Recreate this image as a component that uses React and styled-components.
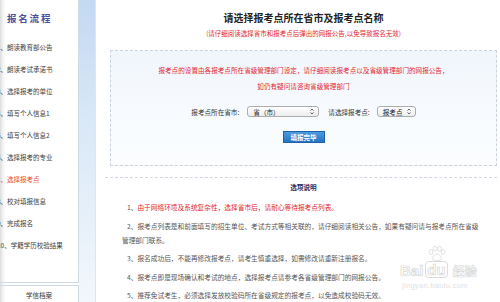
import React from "react";
import styled, { createGlobalStyle } from "styled-components";

const Global = createGlobalStyle`
  html, body { margin: 0; padding: 0; background: #fff; }
  body {
    width: 500px; height: 302px; overflow: hidden;
    font-family: "Noto Sans CJK SC", "Noto Sans", sans-serif;
    color: #444;
  }
`;

const Page = styled.div`
  display: flex;
  width: 500px;
  height: 302px;
  overflow: hidden;
`;

const Sidebar = styled.aside`
  width: 79px;
  flex: none;
  display: flex;
  flex-direction: column;
  gap: 2px;
  background: linear-gradient(to right, #dcdcdc, #f4f4f4 3px, #fff 6px);
`;

const NavBox = styled.div`
  box-sizing: border-box;
  height: 283px;
  border-right: 1px solid #cfdae6;
  border-bottom: 1px solid #cfdae6;
  padding-top: 11px;
`;

const NavTitle = styled.div`
  font-size: 9.5px;
  line-height: 14px;
  font-weight: 700;
  letter-spacing: 1.8px;
  color: #4b4f9e;
  padding-left: 7px;
`;

const NavList = styled.ul`
  list-style: none;
  margin: 11px 0 0 -3px;
  padding: 0;
`;

const NavItem = styled.li`
  height: 22px;
  line-height: 22px;
  font-size: 6.5px;
  white-space: nowrap;
  color: ${(p) => (p.$active ? "#ec4a2a" : "#3d3d3d")};
`;

const ArchiveBox = styled.div`
  flex: 1;
  border-top: 1px solid #cfdae6;
  border-right: 1px solid #cfdae6;
  padding-top: 2px;
  text-align: center;
`;

const ArchiveTitle = styled.div`
  font-size: 6.5px;
  line-height: 14px;
  color: #333;
`;

const Strip = styled.div`
  width: 16px;
  flex: none;
  background: linear-gradient(to bottom, #c2d9f2, #d9e8f7 40%, #f2f7fc);
`;

const Main = styled.main`
  position: relative;
  flex: 1;
  border-left: 1px solid #dfe5ec;
  background: #fff;
`;

const Column = styled.div`
  width: 387px;
  margin-left: 14px;
  padding-top: 11px;
  display: flex;
  flex-direction: column;
`;

const Title = styled.h1`
  margin: 0;
  text-align: center;
  font-size: 10px;
  line-height: 14px;
  font-weight: 700;
  color: #222;
`;

const Subtitle = styled.div`
  margin-top: 3px;
  text-align: center;
  font-size: 6.5px;
  line-height: 10px;
  color: #e3262e;
`;

const NoticeBox = styled.section`
  margin-top: 12px;
  height: 116px;
  box-sizing: border-box;
  border: 1px dashed #c9d2de;
  background: linear-gradient(to bottom, #f1f6fc, #f8fbfe 60%, #fbfdff);
  padding-top: 11px;
  display: flex;
  flex-direction: column;
  align-items: center;
`;

const Notice = styled.p`
  margin: 0;
  text-align: center;
  font-size: 6.6px;
  line-height: 16px;
  color: #e3262e;
  white-space: nowrap;
`;

const FormRow = styled.div`
  margin-top: 12px;
  height: 11px;
  display: flex;
  align-items: center;
  font-size: 6.6px;
  color: #333;
`;

const Label = styled.span`
  margin-left: ${(p) => p.$gap || 0}px;
  white-space: nowrap;
`;

const Select = styled.div`
  box-sizing: border-box;
  width: ${(p) => p.$w}px;
  height: 11px;
  margin-left: ${(p) => p.$gap}px;
  border: 1px solid #adadad;
  border-radius: 3px;
  background: linear-gradient(#ffffff, #ededed);
  display: flex;
  align-items: center;
  justify-content: space-between;
  padding: 0 4px 0 5px;
  font-size: 6.6px;
  color: #222;
  white-space: nowrap;
`;

const SubmitButton = styled.button`
  margin-top: 14px;
  width: 42px;
  height: 12px;
  padding: 0;
  border: 1px solid #1d63a8;
  background: linear-gradient(#4b9be0, #2774c2);
  color: #fff;
  font-family: inherit;
  font-size: 6.5px;
  font-weight: 700;
  line-height: 10px;
`;

const Divider = styled.hr`
  margin: 11px 0 0 -5px;
  border: none;
  border-top: 1px dashed #d3d9e2;
  width: 392px;
`;

const SectionTitle = styled.h2`
  margin: 2px 0 0;
  text-align: center;
  font-size: 6.6px;
  line-height: 14px;
  font-weight: 700;
  color: #2b2d63;
`;

const Tips = styled.ol`
  list-style: none;
  margin: 6px 0 0;
  padding: 0 0 0 12px;
  display: flex;
  flex-direction: column;
  gap: 4.5px;
`;

const Tip = styled.li`
  font-size: 6.7px;
  line-height: 14px;
  color: #555;
  text-indent: 5px;
  white-space: nowrap;
`;

const Red = styled.span`
  color: #e3262e;
`;

const Watermark = styled.div`
  position: absolute;
  left: 304px;
  top: 247px;
  display: flex;
  flex-direction: column;
  align-items: flex-start;
  pointer-events: none;
`;

const MarkRow = styled.div`
  position: relative;
  display: flex;
  align-items: flex-end;
  gap: 2px;
  margin-top: 14px;
`;

const MarkLatin = styled.span`
  font-family: "Liberation Sans", Arial, sans-serif;
  font-weight: 700;
  font-size: 15px;
  line-height: 15px;
  color: #fff;
  -webkit-text-stroke: 0.7px #d6d6d6;
`;

const MarkDu = styled(MarkLatin)`
  border: 1px solid #dcdcdc;
  border-radius: 4px;
  padding: 0 1px;
`;

const MarkCjk = styled.span`
  font-size: 12px;
  line-height: 14px;
  font-weight: 700;
  margin-left: 3px;
  color: #fff;
  -webkit-text-stroke: 0.6px #d6d6d6;
`;

const Paw = styled.svg`
  position: absolute;
  left: 27px;
  top: -15px;
`;

const MarkUrl = styled.div`
  margin-top: 3px;
  margin-left: 2px;
  font-family: "Liberation Sans", Arial, sans-serif;
  font-size: 7.5px;
  color: #e2e2e2;
  letter-spacing: 0.3px;
`;

const Arrows = () => (
  <svg width="4" height="7" viewBox="0 0 4 7" fill="none" stroke="#444" strokeWidth="0.8">
    <path d="M0.5 2.6 L2 1 L3.5 2.6" />
    <path d="M0.5 4.4 L2 6 L3.5 4.4" />
  </svg>
);

const steps = [
  "1、朗读教育部公告",
  "2、朗读考试承诺书",
  "3、选择报考的单位",
  "4、填写个人信息1",
  "5、填写个人信息2",
  "6、选择报考的专业",
  "7、选择报考点",
  "8、校对填报信息",
  "9、完成报名",
  "10、学籍学历校验结果",
];

export default function App() {
  return (
    <>
      <Global />
      <Page>
        <Sidebar>
          <NavBox>
            <NavTitle>报名流程</NavTitle>
            <NavList>
              {steps.map((s, i) => (
                <NavItem key={s} $active={i === 6}>
                  {s}
                </NavItem>
              ))}
            </NavList>
          </NavBox>
          <ArchiveBox>
            <ArchiveTitle>学信档案</ArchiveTitle>
          </ArchiveBox>
        </Sidebar>
        <Strip />
        <Main>
          <Column>
            <Title>请选择报考点所在省市及报考点名称</Title>
            <Subtitle>(请仔细阅读选择省市和报考点后弹出的网报公告,以免导致报名无效)</Subtitle>
            <NoticeBox>
              <Notice>
                报考点的设置由各报考点所在省级管理部门设定，请仔细阅读报考点以及省级管理部门的网报公告，
                <br />
                如仍有疑问请咨询省级管理部门
              </Notice>
              <FormRow>
                <Label>报考点所在省市:</Label>
                <Select $w={72} $gap={8}>
                  <span>省（市）</span>
                  <Arrows />
                </Select>
                <Label $gap={9}>请选择报考点:</Label>
                <Select $w={39} $gap={7}>
                  <span>报考点</span>
                  <Arrows />
                </Select>
              </FormRow>
              <SubmitButton type="button">填报完毕</SubmitButton>
            </NoticeBox>
            <Divider />
            <SectionTitle>选项说明</SectionTitle>
            <Tips>
              <Tip>
                1、<Red>由于网络环境及系统复杂性，选择省市后，请耐心等待报考点列表。</Red>
              </Tip>
              <Tip>
                2、报考点列表是和前面填写的招生单位、考试方式等相关联的，请仔细阅读相关公告，如果有疑问请与报考点所在省级
                <br />
                管理部门联系。
              </Tip>
              <Tip>3、报名成功后，不能再修改报考点，请考生慎重选择，如需修改请重新注册报名。</Tip>
              <Tip>4、报考点即是现场确认和考试的地点，选择报考点请参考各省级管理部门的网报公告。</Tip>
              <Tip>5、推荐免试考生，必须选择发放校验码所在省级规定的报考点，以免造成校验码无效。</Tip>
            </Tips>
          </Column>
          <Watermark>
            <MarkRow>
              <Paw width="20" height="16" viewBox="0 0 20 16" fill="none" stroke="#dadada" strokeWidth="0.8">
                <ellipse cx="4" cy="6" rx="2" ry="2.6" />
                <ellipse cx="8" cy="2.8" rx="2" ry="2.4" />
                <ellipse cx="12.5" cy="2.8" rx="2" ry="2.4" />
                <ellipse cx="16.2" cy="6" rx="2" ry="2.6" />
                <path d="M5.5 13.5 C6 9.5 8 8 10 8 C12 8 14 9.5 14.5 13.5 C13 15 7 15 5.5 13.5 Z" />
              </Paw>
              <MarkLatin>Bai</MarkLatin>
              <MarkDu>du</MarkDu>
              <MarkCjk>经验</MarkCjk>
            </MarkRow>
            <MarkUrl>jingyan.baidu.com</MarkUrl>
          </Watermark>
        </Main>
      </Page>
    </>
  );
}
